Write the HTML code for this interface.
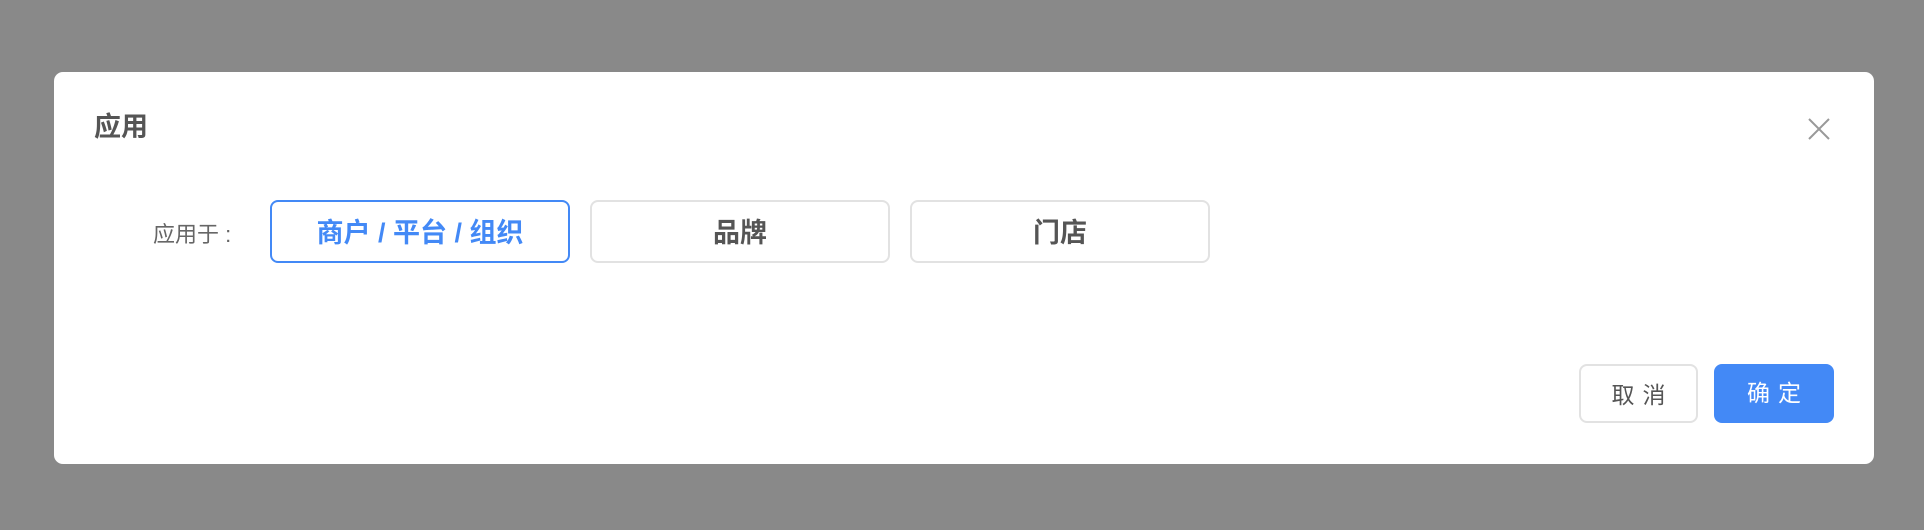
<!DOCTYPE html>
<html><head><meta charset="utf-8"><style>
body{margin:0;width:1924px;height:530px;background:#898989;font-family:"Liberation Sans","Noto Sans CJK SC",sans-serif;position:relative;overflow:hidden}
.dlg{position:absolute;left:54px;top:72px;width:1820px;height:392px;background:#fff;border-radius:9px}
.t{position:absolute;left:40px;top:38px;font-size:27px;font-weight:bold;color:#555;line-height:34px}
.x{position:absolute;left:1754px;top:46px}
.lbl{position:absolute;left:99px;top:147px;font-size:22px;color:#666;line-height:32px}
.opt{position:absolute;top:128px;height:63px;width:300px;box-sizing:border-box;border:2px solid #e2e2e2;border-radius:8px;text-align:center;line-height:63px;font-size:27px;font-weight:bold;color:#555}
.opt.a{border-color:#4389f6;color:#4389f6}
.btn{position:absolute;top:292px;height:59px;width:119px;box-sizing:border-box;border-radius:8px;text-align:center;line-height:59px;font-size:23px;letter-spacing:8px;text-indent:8px}
.c{left:1525px;border:2px solid #e2e2e2;color:#555}
.o{left:1660px;width:120px;background:#4389f6;color:#fff}
</style></head><body>
<div class="dlg">
<div class="t">应用</div>
<svg class="x" width="22" height="22" viewBox="0 0 22 22"><path d="M1 1L21 21M21 1L1 21" stroke="#999" stroke-width="2" fill="none"/></svg>
<div class="lbl">应用于 :</div>
<div class="opt a" style="left:216px">商户 / 平台 / 组织</div>
<div class="opt" style="left:536px">品牌</div>
<div class="opt" style="left:856px">门店</div>
<div class="btn c">取消</div>
<div class="btn o">确定</div>
</div>
</body></html>
